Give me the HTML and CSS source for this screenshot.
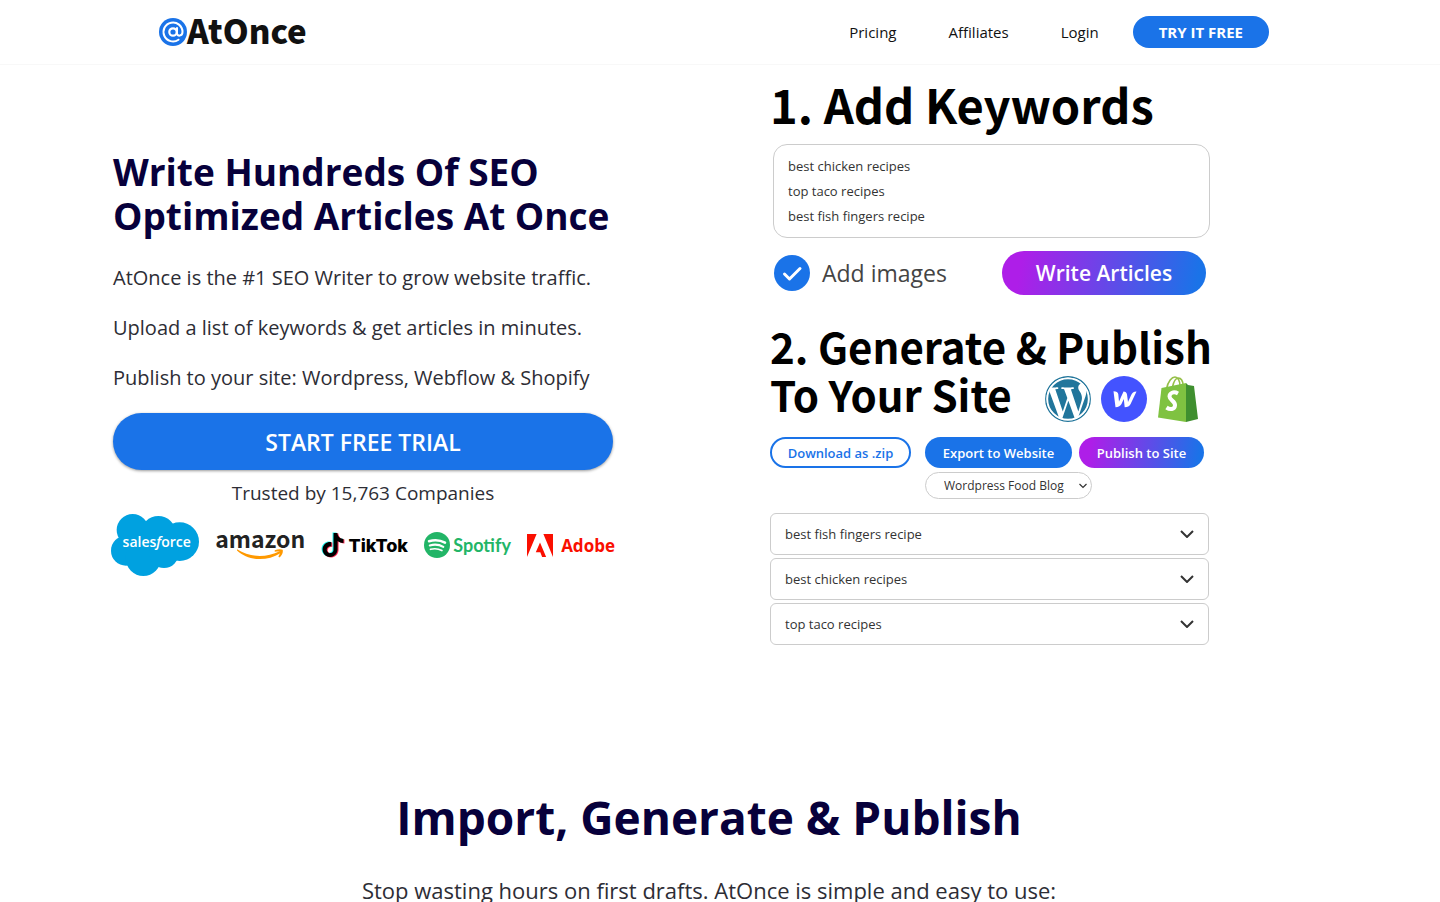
FILE: index.html
```html
<!DOCTYPE html>
<html lang="en">
<head>
  <meta charset="UTF-8" />
  <meta name="viewport" content="width=device-width, initial-scale=1.0" />
  <title>AtOnce</title>
  <link rel="stylesheet" href="styles.css">
</head>
<body>
  <header class="header">
    <div class="header-inner">
      <a href="#" class="logo">
        <svg class="logo-icon" viewBox="0 0 28 28" aria-hidden="true">
          <circle cx="14" cy="14" r="14" fill="#1a73e8" />
          <circle cx="14" cy="14" r="3.7" fill="none" stroke="#fff" stroke-width="2.2" />
          <path d="M18 10v5.200c0 3.600 5.500 3.200 5.500-1.200a9.500 9.500 0 1 0-4 7.700" fill="none" stroke="#fff" stroke-width="2" stroke-linecap="round" />
        </svg>
        <span>AtOnce</span>
      </a>
      <nav class="nav">
        <a href="#">Pricing</a>
        <a href="#">Affiliates</a>
        <a href="#">Login</a>
        <a href="#" class="nav-cta">TRY IT FREE</a>
      </nav>
    </div>
  </header>

  <main class="main">
    <section class="hero">
      <div class="hero-text">
        <h1>Write Hundreds Of SEO Optimized Articles At Once</h1>
        <p>AtOnce is the #1 SEO Writer to grow website traffic.</p>
        <p>Upload a list of keywords &amp; get articles in minutes.</p>
        <p>Publish to your site: Wordpress, Webflow &amp; Shopify</p>
        <button type="button" class="start-btn">START FREE TRIAL</button>
        <div class="trusted">Trusted by 15,763 Companies</div>

        <div class="brands">
          <svg class="salesforce" viewBox="33 42 264 186" role="img" aria-label="salesforce">
            <g fill="#00a1e0">
              <circle cx="98" cy="90" r="48" />
              <circle cx="175" cy="100" r="52" />
              <circle cx="239" cy="125" r="58" />
              <circle cx="78" cy="152" r="45" />
              <circle cx="130" cy="175" r="53" />
              <circle cx="192" cy="160" r="44" />
            </g>
            <text x="170" y="141" text-anchor="middle" class="salesforce-name">sales<tspan font-style="italic">f</tspan>orce</text>
          </svg>

          <div class="amazon">
            <span>amazon</span>
            <svg viewBox="0 0 142 32" aria-hidden="true">
              <path d="M0 0C40 26 88 26 129 6l2 6C90 38 34 36 0 4z" fill="#ff9900" />
              <path d="M114 3c10-4 20-4 24-1 2 7-2 17-10 23l-3-3c4-7 6-11 4-14-3-2-9-1-15 0z" fill="#ff9900" />
            </svg>
          </div>

          <div class="brand tiktok">
            <svg viewBox="0 0 24 25" aria-hidden="true">
              <defs>
                <path id="note" d="M12.525.02c1.31-.02 2.61-.01 3.91-.02.08 1.53.63 3.09 1.75 4.17 1.12 1.11 2.7 1.62 4.24 1.79v4.03c-1.44-.05-2.89-.35-4.2-.97-.57-.26-1.1-.59-1.62-.93-.01 2.92.01 5.84-.02 8.75-.08 1.4-.54 2.79-1.35 3.94-1.31 1.92-3.58 3.17-5.91 3.21-1.43.08-2.86-.31-4.08-1.03-2.02-1.19-3.44-3.37-3.65-5.71-.02-.5-.03-1-.01-1.49.18-1.9 1.12-3.72 2.58-4.96 1.66-1.44 3.98-2.13 6.15-1.72.02 1.48-.04 2.96-.04 4.44-.99-.32-2.15-.23-3.02.37-.63.41-1.11 1.04-1.36 1.75-.21.51-.15 1.07-.14 1.61.24 1.64 1.82 3.02 3.5 2.87 1.12-.01 2.19-.66 2.77-1.61.19-.33.4-.67.41-1.06.1-1.79.06-3.57.07-5.36.01-4.03-.01-8.05.02-12.07z" />
              </defs>
              <use href="#note" x="-1" y="0" fill="#25f4ee" />
              <use href="#note" x="1" y="1" fill="#fe2c55" />
              <use href="#note" x="0" y="0.5" fill="#000" />
            </svg>
            <span>TikTok</span>
          </div>

          <div class="brand spotify">
            <svg viewBox="0 0 26 26" aria-hidden="true">
              <circle cx="13" cy="13" r="13" fill="#22b567" />
              <g fill="none" stroke="#fff" stroke-linecap="round">
                <path d="M5 9.2c5.500-1.500 11.500-1 16 1.500" stroke-width="2.500" />
                <path d="M5.800 13.400c4.600-1.300 9.600-.8 13.500 1.400" stroke-width="2.100" />
                <path d="M6.500 17.300c4-1 8-.6 11.400 1.300" stroke-width="1.700" />
              </g>
            </svg>
            <span>Spotify</span>
          </div>

          <div class="brand adobe">
            <svg viewBox="0 1.376 24 21.248" aria-hidden="true">
              <path d="M13.966 22.624l-1.690-4.281H8.122l3.892-9.144 5.662 13.425zM8.884 1.376H0v21.248zm15.116 0h-8.884L24 22.624Z" fill="#fa0f00" />
            </svg>
            <span>Adobe</span>
          </div>
        </div>
      </div>

      <div class="demo">
        <h2 class="step-one">1. Add Keywords</h2>
        <textarea class="keywords" rows="3" aria-label="Keywords">best chicken recipes
top taco recipes
best fish fingers recipe</textarea>

        <div class="write-row">
          <label class="add-images">
            <span class="check">
              <input type="checkbox" checked />
              <svg viewBox="0 0 36 36" aria-hidden="true">
                <path d="M10.500 19l5 5L26 13.500" fill="none" stroke="#fff" stroke-width="3" stroke-linecap="round" stroke-linejoin="round" />
              </svg>
            </span>
            Add images
          </label>
          <button type="button" class="write-btn">Write Articles</button>
        </div>

        <div class="step-two">
          <h2>2. Generate &amp; Publish<br>To Your Site</h2>
          <div class="platforms">
            <svg viewBox="0 0 24 24" role="img" aria-label="WordPress">
              <path fill="#21759b" d="M21.469 6.825c.84 1.537 1.318 3.300 1.318 5.175 0 3.979-2.156 7.456-5.363 9.325l3.295-9.527c.615-1.540.820-2.771.820-3.864 0-.405-.026-.780-.070-1.110m-7.981.105c.647-.030 1.232-.105 1.232-.105.582-.075.514-.930-.067-.899 0 0-1.755.135-2.880.135-1.064 0-2.850-.150-2.850-.150-.585-.030-.661.855-.075.885 0 0 .540.061 1.125.090l1.680 4.605-2.370 7.080L5.354 6.900c.649-.030 1.234-.100 1.234-.100.585-.075.516-.930-.065-.896 0 0-1.746.138-2.874.138-.200 0-.438-.008-.690-.015C4.911 3.150 8.235 1.215 12 1.215c2.809 0 5.365 1.072 7.286 2.833-.046-.003-.091-.009-.141-.009-1.060 0-1.812.923-1.812 1.914 0 .890.513 1.643 1.060 2.531.411.720.890 1.643.890 2.977 0 .915-.354 1.994-.821 3.479l-1.075 3.585-3.900-11.610.001.014zM12 22.784c-1.059 0-2.081-.153-3.048-.437l3.237-9.406 3.315 9.087c.024.053.050.101.078.149-1.120.393-2.325.609-3.582.609M1.211 12c0-1.564.336-3.050.935-4.390L7.290 21.709C3.694 19.960 1.212 16.271 1.211 12" />
              <circle cx="12" cy="12" r="11.600" fill="none" stroke="#21759b" stroke-width=".7" />
              <circle cx="12" cy="12" r="10.800" fill="none" stroke="#fff" stroke-width=".9" />
            </svg>
            <svg viewBox="0 0 46 46" role="img" aria-label="Webflow">
              <circle cx="23" cy="23" r="23" fill="#4353ff" />
              <path fill="#fff" d="M35.500 15.500c-3 0-4.500 1.600-5.300 3.500l-3.200 7-1-7.500c-.3-2-1.600-3-3.500-3-.8 1.800-4 9-4.500 10.300l-.7-7.500c-.2-1.900-2-3-4.800-3l2 16c3 0 5-1.200 6-3.200l2.300-5 .9 8.200c2.900 0 4.800-1 5.900-3.300z" />
            </svg>
            <svg viewBox="2 0 46 46" role="img" aria-label="Shopify">
              <path d="M11.500 13C13 5 17 1 20 1S25 5 25 10M17.500 11C19 4 21 2 23.500 2S28 5 28 9" fill="none" stroke="#95bf47" stroke-width="1.600" />
              <path fill="#7fc241" d="M6.500 12L31 7v39L3 41.500z" />
              <path fill="#3f8f2f" d="M31 7l2 2 6 1 4 33-12 3z" />
              <path d="M23 17.500c-4.500-2.500-8.500-.5-8.500 3 0 4 6 4.500 5.500 9-.4 4-5 4.500-8.500 2" fill="none" stroke="#fff" stroke-width="4" />
            </svg>
          </div>
        </div>

        <div class="export-row">
          <button type="button" class="pill pill-outline">Download as .zip</button>
          <button type="button" class="pill pill-blue">Export to Website</button>
          <button type="button" class="pill pill-gradient">Publish to Site</button>
          <div class="site-select">
            <select aria-label="Site">
              <option>Wordpress Food Blog</option>
            </select>
            <svg viewBox="0 0 8 6" aria-hidden="true">
              <path d="M.5 1L4 4.500 7.500 1" fill="none" stroke="#333" stroke-width="1.200" />
            </svg>
          </div>
        </div>

        <div class="articles">
          <button type="button" class="article">
            best fish fingers recipe
            <svg viewBox="0 0 14 8" aria-hidden="true"><path d="M1 1l6 6 6-6" /></svg>
          </button>
          <button type="button" class="article">
            best chicken recipes
            <svg viewBox="0 0 14 8" aria-hidden="true"><path d="M1 1l6 6 6-6" /></svg>
          </button>
          <button type="button" class="article">
            top taco recipes
            <svg viewBox="0 0 14 8" aria-hidden="true"><path d="M1 1l6 6 6-6" /></svg>
          </button>
        </div>
      </div>
    </section>

    <section class="intro">
      <h2>Import, Generate &amp; Publish</h2>
      <p>Stop wasting hours on first drafts. AtOnce is simple and easy to use:</p>
    </section>
  </main>
</body>
</html>
```
FILE: styles.css
```css
:root {
  --blue: #1a73e8;
  --navy: #07003b;
  --text: #2d2d35;
  --gradient: linear-gradient(100deg, #ae1ee8 10%, #1a73e8 95%);
  --display: 'Noto Sans CJK JP', 'Open Sans', sans-serif;
}

* {
  box-sizing: border-box;
  margin: 0;
  padding: 0;
}

body {
  font-family: 'Segoe UI', 'Open Sans', sans-serif;
  color: var(--text);
  background: #fff;
  overflow-x: hidden;
}

button,
select,
textarea {
  font-family: inherit;
}

button {
  border: none;
  cursor: pointer;
}

a {
  color: inherit;
  text-decoration: none;
}

/* Header */
.header {
  border-bottom: 1px solid #f8f8f8;
}

.header-inner {
  display: flex;
  align-items: center;
  justify-content: space-between;
  height: 64px;
  max-width: 1122px;
  margin: 0 auto;
  padding-right: 12px;
}

.logo {
  display: flex;
  align-items: center;
  font-family: var(--display);
  font-size: 33px;
  font-weight: 900;
  line-height: 40px;
  color: #111;
}

.logo span {
  padding-bottom: 4px;
}

.logo-icon {
  width: 28px;
  height: 28px;
}

.nav {
  display: flex;
  align-items: center;
  gap: 52px;
  font-size: 15px;
  color: #111;
}

.nav-cta {
  margin-left: -18px;
  padding: 0 26px;
  border-radius: 16px;
  background: var(--blue);
  color: #fff;
  font-weight: 700;
  line-height: 32px;
}

/* Hero */
.main {
  padding-right: 22px;
}

.hero {
  display: grid;
  grid-template-columns: minmax(0, 500px) minmax(0, 450px);
  gap: 157px;
  max-width: 1192px;
  margin: 0 auto;
}

.hero-text {
  padding-top: 85px;
}

.hero-text h1 {
  margin-bottom: 25px;
  font-size: 37px;
  line-height: 44px;
  color: var(--navy);
}

.hero-text p {
  margin-bottom: 20px;
  font-size: 20px;
  line-height: 30px;
}

.start-btn {
  width: 100%;
  height: 57px;
  border-radius: 29px;
  background: var(--blue);
  box-shadow: 0 1px 3px rgba(0, 0, 0, 0.4);
  color: #fff;
  font-size: 23px;
  font-weight: 600;
}

.trusted {
  margin: 9px 0 7px;
  font-size: 19px;
  line-height: 28px;
  text-align: center;
}

/* Company logos */
.brands {
  display: flex;
  align-items: center;
  justify-content: space-between;
  margin: 0 -2px;
}

.salesforce {
  width: 88px;
  height: 62px;
}

.salesforce-name {
  fill: #fff;
  font-size: 42px;
  font-weight: 600;
}

.amazon {
  display: flex;
  flex-direction: column;
  align-items: center;
  padding-bottom: 4px;
  color: #222;
  font-family: 'Noto Sans CJK JP', sans-serif;
  font-size: 23px;
  font-weight: 700;
  line-height: 22px;
}

.amazon svg {
  width: 47px;
  height: 11px;
}

.brand {
  display: flex;
  align-items: center;
  gap: 3px;
  font-size: 17px;
  font-weight: 700;
}

.brand svg {
  width: 26px;
  height: 26px;
}

.tiktok {
  color: #000;
  font-family: Inter, sans-serif;
  font-size: 18px;
  font-weight: 800;
}

.tiktok svg {
  width: 24px;
}

.spotify {
  color: #22b567;
  font-family: Lato, sans-serif;
  font-size: 18px;
}

.adobe {
  gap: 8px;
  color: #fa0f00;
}

.adobe svg {
  height: 23px;
}

/* Product demo */
.demo h2 {
  font-family: var(--display);
  color: #000;
  white-space: nowrap;
}

.demo .step-one {
  padding-top: 9px;
  font-size: 47px;
  line-height: 60px;
}

.keywords {
  display: block;
  width: 437px;
  max-width: 100%;
  height: 94px;
  margin: 10px 0 13px 3px;
  padding: 9px 14px;
  border: 1px solid #ccc;
  border-radius: 14px;
  outline: none;
  resize: none;
  overflow: hidden;
  color: #333;
  font-size: 13px;
  line-height: 25px;
}

.write-row {
  display: flex;
  align-items: center;
  justify-content: space-between;
  width: 436px;
  padding-left: 4px;
}

.add-images {
  display: flex;
  align-items: center;
  gap: 12px;
  color: #444;
  font-size: 23px;
}

.check {
  display: grid;
}

.check input,
.check svg {
  grid-area: 1 / 1;
  width: 36px;
  height: 36px;
}

.check input {
  appearance: none;
  border-radius: 50%;
  background: var(--blue);
}

.check svg {
  pointer-events: none;
}

.write-btn {
  width: 204px;
  height: 44px;
  border-radius: 22px;
  background: var(--gradient);
  color: #fff;
  font-size: 21px;
  font-weight: 600;
}

.step-two {
  display: grid;
  margin-top: 27px;
}

.step-two h2 {
  grid-area: 1 / 1;
  margin-bottom: 4px;
  font-size: 42px;
  line-height: 48px;
}

.platforms {
  display: flex;
  grid-area: 1 / 1;
  align-self: end;
  justify-self: end;
  gap: 10px;
  padding-right: 17px;
}

.platforms svg {
  width: 46px;
  height: 46px;
}

.export-row {
  display: grid;
  grid-template-columns: 141px 147px 118px;
  column-gap: 14px;
  row-gap: 4px;
  width: 434px;
  margin-top: 15px;
}

.pill {
  height: 31px;
  border-radius: 16px;
  color: #fff;
  font-size: 13px;
  font-weight: 600;
  white-space: nowrap;
}

.pill-outline {
  border: 2px solid var(--blue);
  background: #fff;
  color: var(--blue);
}

.pill-blue {
  background: var(--blue);
}

.pill-gradient {
  margin-left: -7px;
  background: var(--gradient);
}

.site-select {
  display: grid;
  grid-column: 2 / 4;
  align-items: center;
  width: 167px;
}

.site-select select {
  grid-area: 1 / 1;
  height: 27px;
  padding-left: 18px;
  border: 1px solid #ccc;
  border-radius: 14px;
  background: #fff;
  appearance: none;
  color: #333;
  font-size: 12px;
}

.site-select svg {
  grid-area: 1 / 1;
  justify-self: end;
  width: 8px;
  height: 6px;
  margin-right: 5px;
  pointer-events: none;
}

.articles {
  display: grid;
  gap: 3px;
  width: 439px;
  margin-top: 14px;
}

.article {
  display: flex;
  align-items: center;
  justify-content: space-between;
  height: 42px;
  padding: 0 14px;
  border: 1px solid #ccc;
  border-radius: 6px;
  background: #fff;
  color: #333;
  font-size: 13px;
}

.article svg {
  width: 14px;
  height: 8px;
  fill: none;
  stroke: #333;
  stroke-width: 2;
}

/* Intro */
.intro {
  margin-top: 140px;
  text-align: center;
}

.intro h2 {
  color: var(--navy);
  font-size: 46px;
  line-height: 64px;
}

.intro p {
  margin-top: 26px;
  font-size: 22px;
  line-height: 30px;
}
```
